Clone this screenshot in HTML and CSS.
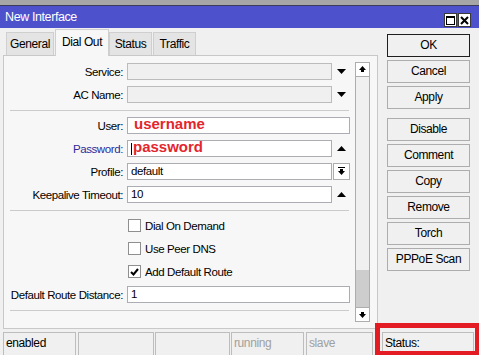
FILE: index.html
```html
<!DOCTYPE html>
<html lang="en">

<head>
    <meta charset="UTF-8">
    <title>New Interface</title>
    <link rel="stylesheet" href="styles.css">
</head>

<body>
    <div class="frame-top"></div>
    <div class="titlebar">
        <span class="title">New Interface</span>
        <div class="tb-buttons">
            <span class="tb-btn">
                <svg width="9" height="9" viewBox="0 0 9 9"><rect x="0.5" y="0.5" width="8" height="8" fill="none" stroke="#000"/><rect x="0" y="0" width="9" height="2" fill="#000"/></svg>
            </span>
            <span class="tb-btn">
                <svg width="9" height="9" viewBox="0 0 9 9"><path d="M1 1 L8 8 M8 1 L1 8" stroke="#000" stroke-width="2"/></svg>
            </span>
        </div>
    </div>

    <div class="main">
        <div class="left">
            <div class="tabs">
                <div class="tab t-general">General</div>
                <div class="tab active t-dial">Dial Out</div>
                <div class="tab t-status">Status</div>
                <div class="tab t-traffic">Traffic</div>
            </div>
            <div class="panel">
                <div class="form">
                    <div class="row">
                        <span class="lbl">Service:</span>
                        <div class="field short disabled"></div>
                        <span class="arrow"><svg width="9" height="5" viewBox="0 0 9 5"><polygon points="0,0 9,0 4.5,5" fill="#000"/></svg></span>
                    </div>
                    <div class="row">
                        <span class="lbl">AC Name:</span>
                        <div class="field short disabled"></div>
                        <span class="arrow"><svg width="9" height="5" viewBox="0 0 9 5"><polygon points="0,0 9,0 4.5,5" fill="#000"/></svg></span>
                    </div>
                    <div class="sep"></div>
                    <div class="row">
                        <span class="lbl">User:</span>
                        <div class="field wide"><span class="secret">username</span></div>
                    </div>
                    <div class="row">
                        <span class="lbl blue">Password:</span>
                        <div class="field short"><span class="caret"></span><span class="secret">password</span></div>
                        <span class="arrow"><svg width="9" height="5" viewBox="0 0 9 5"><polygon points="0,5 9,5 4.5,0" fill="#000"/></svg></span>
                    </div>
                    <div class="row">
                        <span class="lbl">Profile:</span>
                        <div class="field short">default</div>
                        <span class="pick">
                            <svg width="7" height="9" viewBox="0 0 7 9"><rect x="0" y="0" width="7" height="1" fill="#000"/><rect x="2" y="2" width="3" height="2" fill="#000"/><polygon points="0,4 7,4 3.5,8" fill="#000"/></svg>
                        </span>
                    </div>
                    <div class="row">
                        <span class="lbl">Keepalive Timeout:</span>
                        <div class="field short">10</div>
                        <span class="arrow"><svg width="9" height="5" viewBox="0 0 9 5"><polygon points="0,5 9,5 4.5,0" fill="#000"/></svg></span>
                    </div>
                    <div class="sep"></div>
                    <div class="row check-row">
                        <span class="box"></span>
                        <span>Dial On Demand</span>
                    </div>
                    <div class="row check-row">
                        <span class="box"></span>
                        <span>Use Peer DNS</span>
                    </div>
                    <div class="row check-row">
                        <span class="box">
                            <svg width="9" height="8" viewBox="0 0 9 8"><path d="M1 4 L3.5 6.5 L8 1" fill="none" stroke="#000" stroke-width="2"/></svg>
                        </span>
                        <span>Add Default Route</span>
                    </div>
                    <div class="row">
                        <span class="lbl">Default Route Distance:</span>
                        <div class="field wide">1</div>
                    </div>
                    <div class="sep"></div>
                </div>
                <div class="scrollbar">
                    <div class="sb-btn">
                        <svg width="7" height="7" viewBox="0 0 7 7"><polygon points="0,4 3.5,0 7,4" fill="#000"/><rect x="2" y="4" width="3" height="2" fill="#000"/></svg>
                    </div>
                    <div class="sb-track"><div class="sb-thumb"></div></div>
                    <div class="sb-btn">
                        <svg width="7" height="7" viewBox="0 0 7 7"><rect x="2" y="1" width="3" height="2" fill="#000"/><polygon points="0,3 7,3 3.5,7" fill="#000"/></svg>
                    </div>
                </div>
            </div>
        </div>

        <div class="actions">
            <div class="btn default">OK</div>
            <div class="btn">Cancel</div>
            <div class="btn">Apply</div>
            <div class="btn group">Disable</div>
            <div class="btn">Comment</div>
            <div class="btn">Copy</div>
            <div class="btn">Remove</div>
            <div class="btn">Torch</div>
            <div class="btn">PPPoE Scan</div>
        </div>
    </div>

    <div class="statusbar">
        <div class="cell c1">enabled</div>
        <div class="cell c2"></div>
        <div class="cell c3"></div>
        <div class="cell c4 dim">running</div>
        <div class="cell c5 dim">slave</div>
        <div class="cell c6">Status:</div>
    </div>

    <div class="highlight"></div>
</body>

</html>
```

FILE: styles.css
```css
body {
    margin: 0;
    width: 479px;
    height: 355px;
    overflow: hidden;
    position: relative;
    background-color: #f0f0f0;
    font-family: "Liberation Sans", Arial, sans-serif;
    font-size: 11.5px;
    letter-spacing: -0.4px;
    color: #000;
}

/* window frame */
.frame-top {
    height: 5px;
    background-color: #a6a6a6;
    border-bottom: 1px solid #3c3c5a;
}

.titlebar {
    height: 22px;
    background-color: #4d51cc;
    color: #fff;
    display: flex;
    justify-content: space-between;
    align-items: flex-end;
    padding: 0 8px 1px 5px;
    box-sizing: border-box;
}

.title {
    font-size: 12.5px;
    line-height: 20px;
}

.tb-buttons {
    display: flex;
    gap: 1px;
}

.tb-btn {
    width: 13px;
    height: 14px;
    box-sizing: border-box;
    background-color: #fff;
    border: 1px solid #3a3a3a;
    display: flex;
    justify-content: center;
    align-items: center;
}

.main {
    display: flex;
    height: 301px;
}

.left {
    width: 378px;
    padding-left: 3px;
    box-sizing: border-box;
}

/* tabs */
.tabs {
    height: 27px;
    display: flex;
    align-items: flex-end;
    padding-left: 3px;
}

.tab {
    height: 23px;
    box-sizing: border-box;
    background-color: #e4e4e4;
    border: 1px solid #cfcfcf;
    border-bottom: none;
    text-align: center;
    line-height: 23px;
    font-size: 12px;
}

.tab.active {
    height: 27px;
    line-height: 25px;
    margin-bottom: -1px;
    background-color: #f7f7f7;
    position: relative;
    z-index: 1;
}

.t-general { width: 48px; margin-right: 1px; }
.t-dial { width: 54px; }
.t-status { width: 43px; margin-right: 1px; }
.t-traffic { width: 43px; }

.panel {
    width: 375px;
    height: 274px;
    box-sizing: border-box;
    background-color: #f7f7f7;
    border: 1px solid #c8c8c8;
    display: flex;
}

/* form */
.form {
    width: 351px;
    padding-top: 7px;
    display: flex;
    flex-direction: column;
    gap: 6px;
}

.row {
    height: 17px;
    display: flex;
    align-items: center;
}

.lbl {
    width: 119px;
    margin-right: 4px;
    text-align: right;
    white-space: nowrap;
}

.lbl.blue {
    color: #2b2b9b;
}

.field {
    height: 17px;
    box-sizing: border-box;
    background-color: #fff;
    border: 1px solid #abadb3;
    padding-left: 3px;
    line-height: 15px;
    display: flex;
    align-items: flex-start;
}

.field.short { width: 205px; }
.field.wide { width: 223px; }

.field.disabled {
    background-color: #f0f0f0;
    border-color: #bcbcbc;
}

.arrow {
    width: 18px;
    display: flex;
    justify-content: center;
    align-items: center;
}

.pick {
    width: 17px;
    height: 17px;
    margin-left: 1px;
    box-sizing: border-box;
    border: 1px solid #adadad;
    background-color: #fff;
    display: flex;
    justify-content: center;
    align-items: center;
}

.secret {
    color: #e3262e;
    font-weight: bold;
    font-size: 15px;
    letter-spacing: 0;
    line-height: 11px;
    padding-left: 3px;
}

.caret {
    width: 1px;
    height: 12px;
    margin-top: 2px;
    background-color: #000;
}

.caret + .secret {
    padding-left: 1px;
}

.sep {
    height: 1px;
    width: 339px;
    margin: 1px 0 0 6px;
    background-color: #cbcbcb;
}

.check-row {
    padding-left: 124px;
    gap: 4px;
}

.box {
    width: 13px;
    height: 13px;
    box-sizing: border-box;
    border: 1px solid #8f8f8f;
    background-color: #fff;
    display: flex;
    justify-content: center;
    align-items: center;
}

/* scrollbar */
.scrollbar {
    width: 15px;
    height: 260px;
    margin-top: 6px;
    display: flex;
    flex-direction: column;
}

.sb-btn {
    height: 15px;
    box-sizing: border-box;
    border: 1px solid #adadad;
    background-color: #fff;
    display: flex;
    justify-content: center;
    align-items: center;
}

.sb-track {
    flex: 1;
    border-left: 1px solid #adadad;
    border-right: 1px solid #adadad;
    background-color: #f0f0f0;
    display: flex;
    flex-direction: column;
    justify-content: flex-end;
}

.sb-thumb {
    height: 37px;
    background-color: #cdcdcd;
}

/* buttons */
.actions {
    padding: 6px 0 0 9px;
    display: flex;
    flex-direction: column;
    gap: 3px;
}

.btn {
    width: 83px;
    height: 23px;
    box-sizing: border-box;
    border: 1px solid #adadad;
    background-color: #f0f0f0;
    text-align: center;
    line-height: 21px;
    font-size: 12px;
}

.btn.default {
    border-color: #1e1e1e;
}

.btn.group {
    margin-top: 6px;
}

/* status bar */
.statusbar {
    display: flex;
    padding: 3px 0 0 3px;
}

.cell {
    height: 24px;
    box-sizing: border-box;
    border: 1px solid #bdbdbd;
    border-bottom: none;
    padding-left: 2px;
    line-height: 21px;
    font-size: 12px;
}

.cell.dim {
    color: #a0a0a0;
}

.c1 { width: 73px; }
.c2 { width: 76px; margin-left: 2px; }
.c3 { width: 75px; margin-left: 1px; }
.c4 { width: 73px; margin-left: 1px; }
.c5 { width: 67px; margin-left: 2px; }
.c6 { width: 92px; margin-left: 9px; }

/* annotation frame over the status field */
.highlight {
    position: absolute;
    left: 375px;
    top: 323px;
    width: 105px;
    height: 33px;
    box-sizing: border-box;
    border: 5px solid #e31b23;
}
```
